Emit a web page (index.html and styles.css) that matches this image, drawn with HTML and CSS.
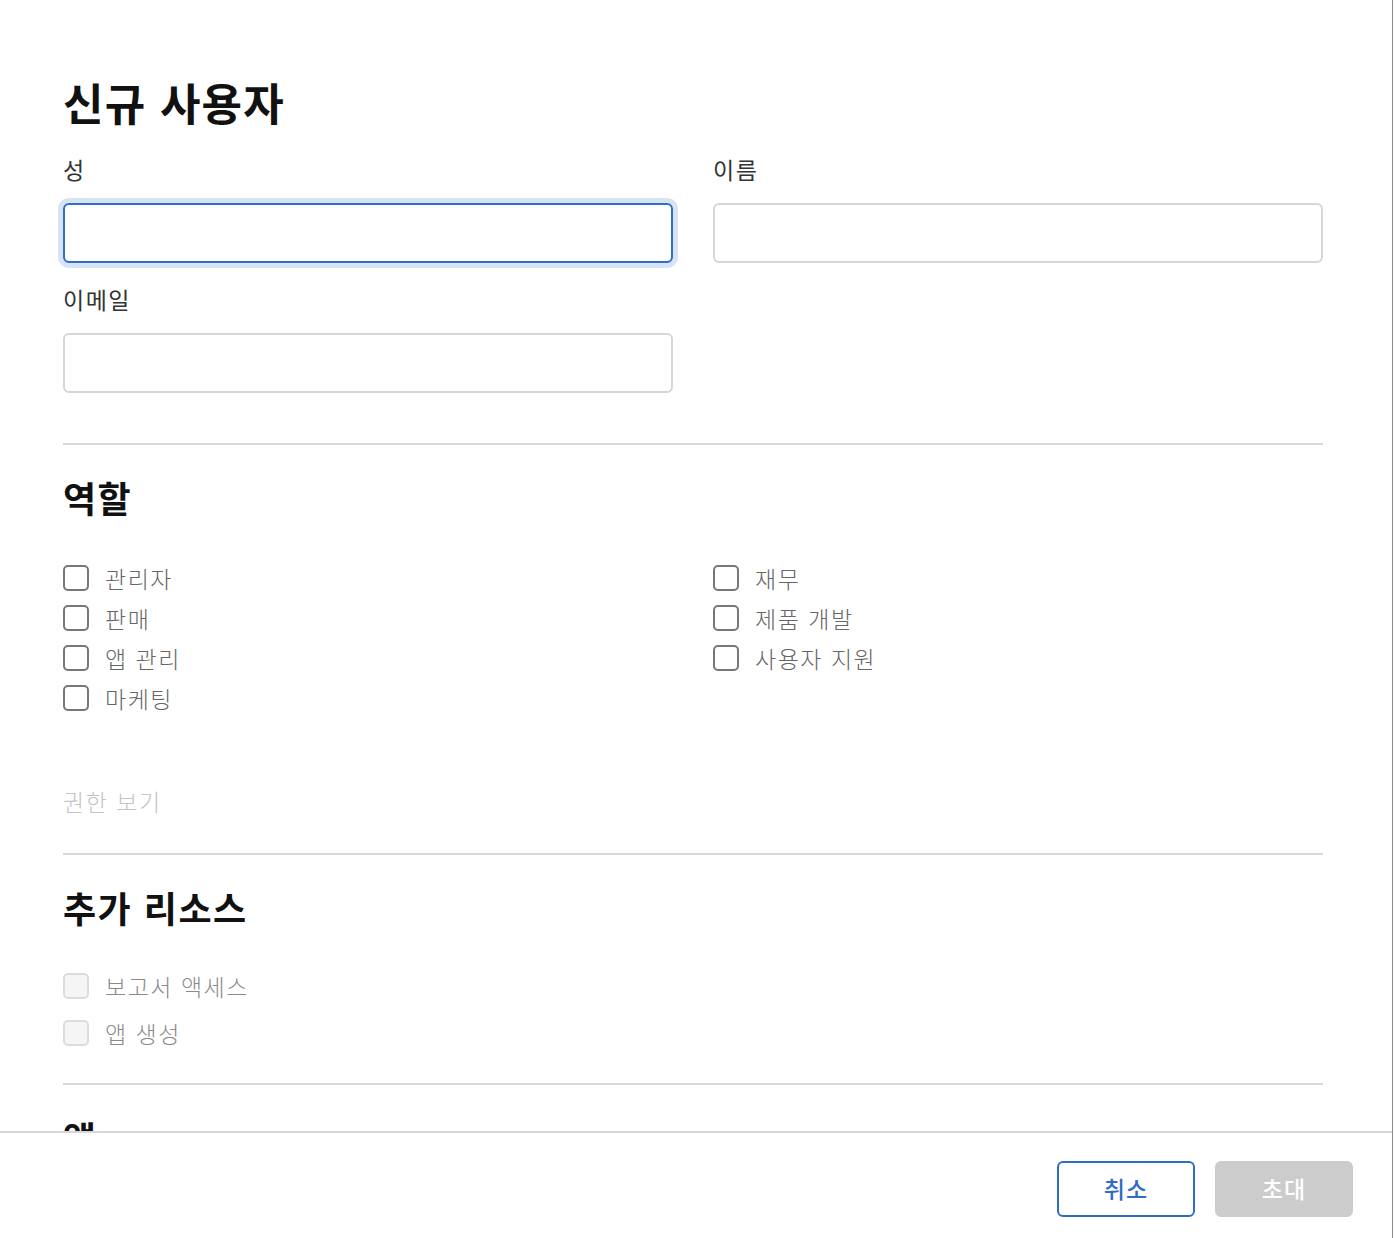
FILE: index.html
```html
<!DOCTYPE html>
<html lang="ko">
<head>
<meta charset="utf-8">
<title>신규 사용자</title>
<link rel="stylesheet" href="styles.css">
</head>
<body>
<div class="dialog">
  <div class="dialog-body">
    <h1 class="title">신규 사용자</h1>
    <div class="fields">
      <div class="field">
        <label class="field-label">성</label>
        <div class="input input-focus"></div>
      </div>
      <div class="field">
        <label class="field-label">이름</label>
        <div class="input"></div>
      </div>
      <div class="field">
        <label class="field-label">이메일</label>
        <div class="input"></div>
      </div>
    </div>
    <hr class="divider divider-first">

    <section class="section">
      <h2 class="section-title">역할</h2>
      <div class="roles">
        <div class="roles-col">
          <div class="check"><span class="box"></span><span class="check-label">관리자</span></div>
          <div class="check"><span class="box"></span><span class="check-label">판매</span></div>
          <div class="check"><span class="box"></span><span class="check-label">앱 관리</span></div>
          <div class="check"><span class="box"></span><span class="check-label">마케팅</span></div>
        </div>
        <div class="roles-col">
          <div class="check"><span class="box"></span><span class="check-label">재무</span></div>
          <div class="check"><span class="box"></span><span class="check-label">제품 개발</span></div>
          <div class="check"><span class="box"></span><span class="check-label">사용자 지원</span></div>
        </div>
      </div>
      <div class="link-muted">권한 보기</div>
    </section>
    <hr class="divider divider-second">

    <section class="section">
      <h2 class="section-title">추가 리소스</h2>
      <div class="resources">
        <div class="check check-disabled"><span class="box"></span><span class="check-label">보고서 액세스</span></div>
        <div class="check check-disabled"><span class="box"></span><span class="check-label">앱 생성</span></div>
      </div>
    </section>
    <hr class="divider divider-third">

    <section class="section">
      <h2 class="section-title">앱</h2>
    </section>
  </div>
  <div class="dialog-footer">
    <button class="btn btn-outline" type="button">취소</button>
    <button class="btn btn-disabled" type="button">초대</button>
  </div>
</div>
</body>
</html>
```

FILE: styles.css
```css
html, body {
  margin: 0;
  padding: 0;
  background: #ffffff;
}

body {
  font-family: "Noto Sans CJK KR", "Noto Sans", sans-serif;
  color: #222222;
}

.dialog {
  width: 1392px;
  height: 1238px;
  border-right: 1px solid #8c8c8c;
  display: flex;
  flex-direction: column;
  background: #ffffff;
}

.dialog-body {
  flex: 1;
  overflow: hidden;
  padding: 0 69px 0 63px;
}

.title {
  margin: 72px 0 0 0;
  font-size: 44px;
  line-height: 60px;
  font-weight: 700;
  color: #111111;
  letter-spacing: 1.2px;
}

.fields {
  margin-top: 24px;
  display: grid;
  grid-template-columns: 610px 610px;
  column-gap: 40px;
  row-gap: 23px;
}

.field {
  display: flex;
  flex-direction: column;
}

.field-label {
  font-size: 23px;
  line-height: 30px;
  color: #333333;
  letter-spacing: 1.5px;
  margin-top: -2px;
  margin-bottom: 19px;
}

.input {
  height: 60px;
  box-sizing: border-box;
  border: 2px solid #d6d6d6;
  border-radius: 6px;
  background: #ffffff;
}

.input-focus {
  border-color: #2f6fc6;
  box-shadow: 0 0 0 5px #d7e4f5;
}

.divider {
  border: 0;
  height: 2px;
  background: #d9d9d9;
  margin: 0;
}

.divider-first { margin-top: 50px; }
.divider-second { margin-top: 37px; }
.divider-third { margin-top: 27px; }

.section-title {
  margin: 32px 0 0 0;
  font-size: 36px;
  line-height: 40px;
  font-weight: 700;
  color: #111111;
  letter-spacing: 1.5px;
}

.roles {
  margin-top: 41px;
  display: grid;
  grid-template-columns: 610px 610px;
  column-gap: 40px;
}

.roles-col {
  display: flex;
  flex-direction: column;
}

.check {
  display: flex;
  align-items: center;
  height: 40px;
}

.box {
  width: 26px;
  height: 26px;
  box-sizing: border-box;
  border: 2px solid #777777;
  border-radius: 5px;
  flex: none;
}

.check-label {
  margin-left: 16px;
  font-size: 23px;
  line-height: 30px;
  font-weight: 300;
  color: #666666;
  letter-spacing: 1.5px;
}

.link-muted {
  margin-top: 68px;
  font-size: 23px;
  line-height: 30px;
  font-weight: 300;
  color: #c4c4c4;
  letter-spacing: 1.5px;
}

.resources {
  margin-top: 35px;
  display: flex;
  flex-direction: column;
}

.resources .check {
  height: 47px;
}

.check-disabled .box {
  border-color: #dcdcdc;
  background: #f5f5f5;
}

.check-disabled .check-label {
  color: #8a8a8a;
}

.dialog-footer {
  flex: none;
  height: 107px;
  box-sizing: border-box;
  border-top: 2px solid #d6d6d6;
  display: flex;
  justify-content: flex-end;
  align-items: flex-start;
  gap: 20px;
  padding: 28px 39px 0 0;
}

.btn {
  width: 138px;
  height: 56px;
  box-sizing: border-box;
  border-radius: 6px;
  font-family: "Noto Sans CJK KR", "Noto Sans", sans-serif;
  font-size: 23px;
  font-weight: 500;
  padding: 0 0 3px 0;
  letter-spacing: 1px;
  cursor: pointer;
}

.btn-outline {
  background: #ffffff;
  border: 2px solid #2f6dc4;
  color: #2f6dc4;
}

.btn-disabled {
  background: #cccccc;
  border: 2px solid #cccccc;
  color: #ffffff;
}
```
